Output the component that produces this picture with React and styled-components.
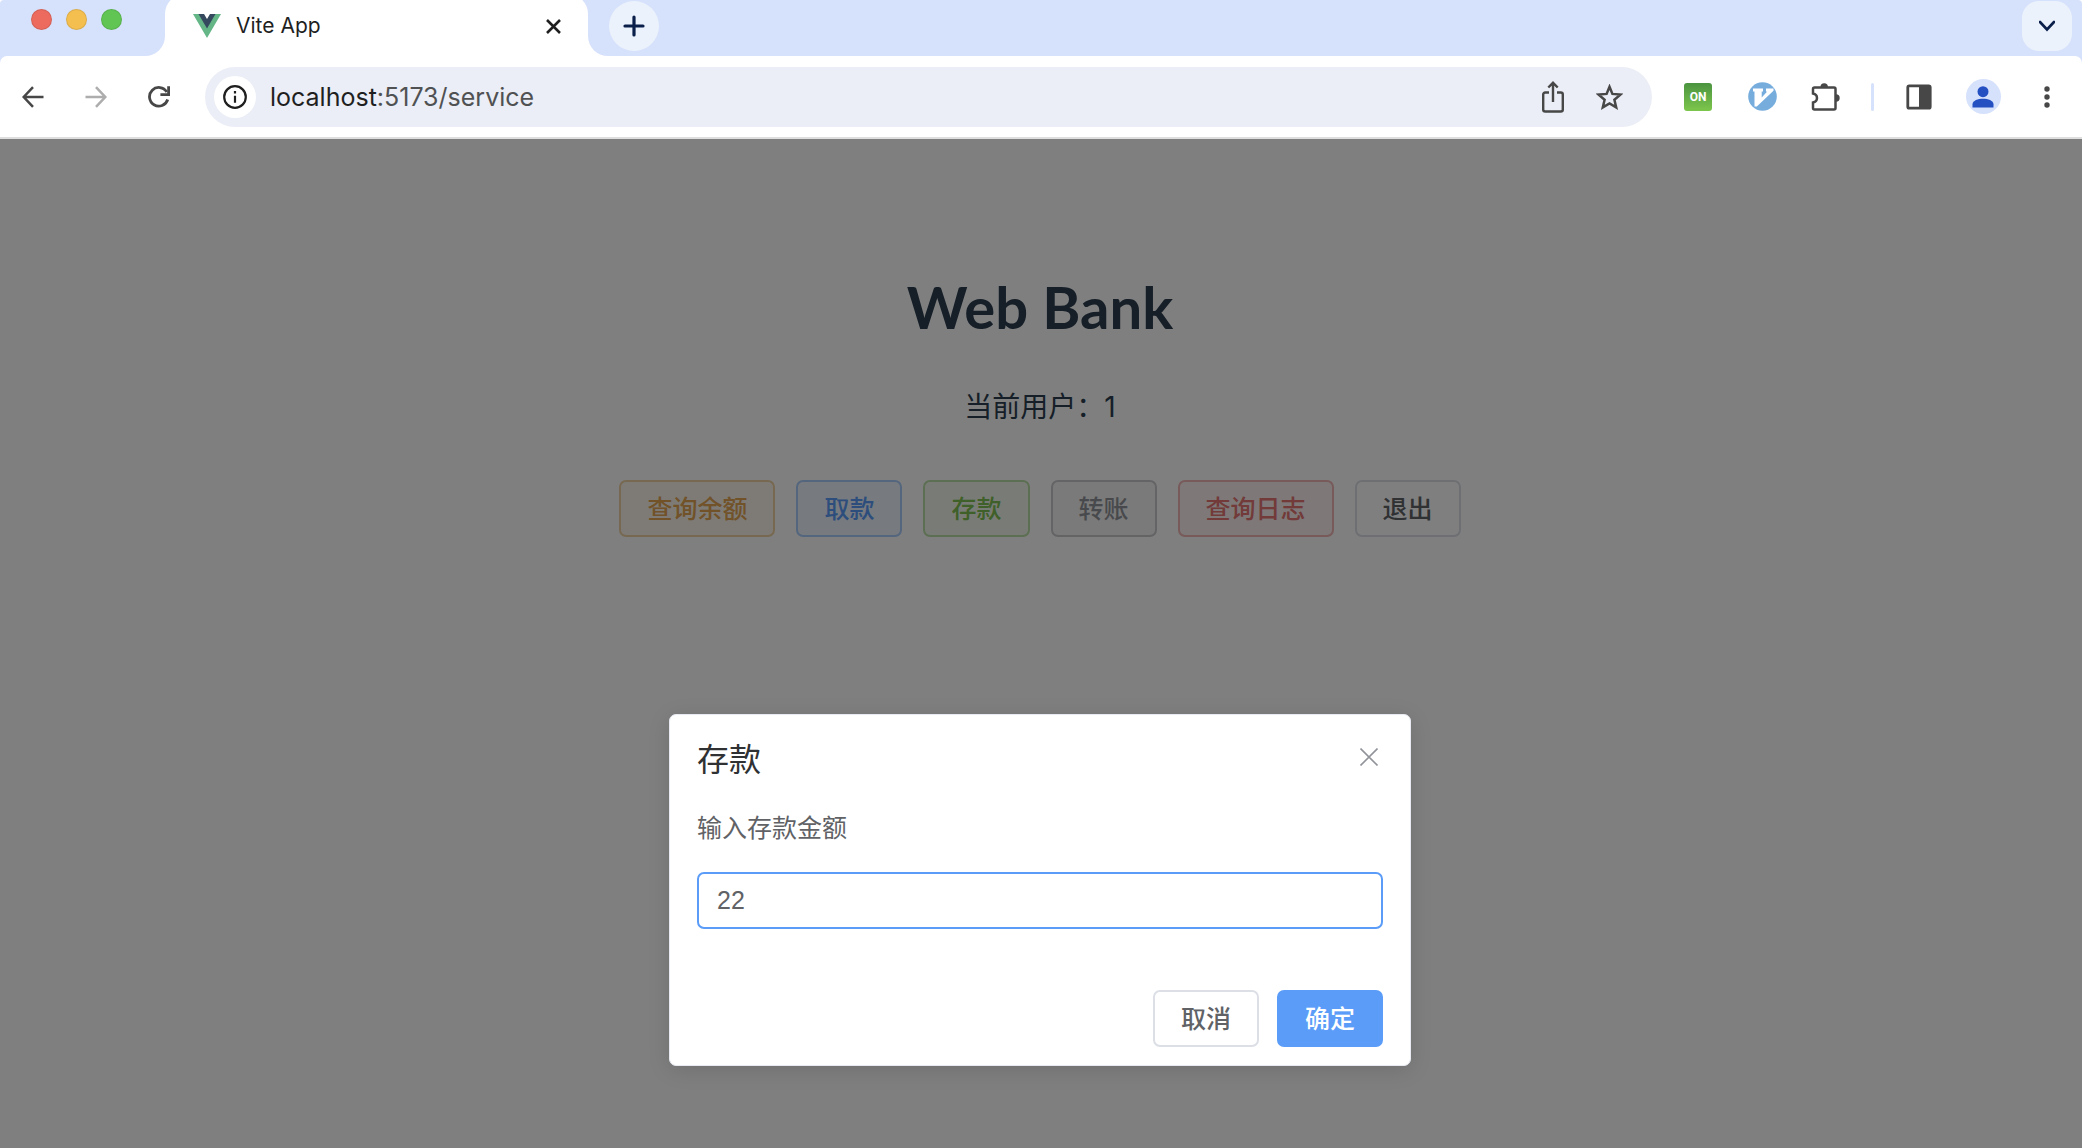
import React, { useState } from "react";
import styled, { createGlobalStyle, css } from "styled-components";

const uiFont = 'Inter, Roboto, "Noto Sans CJK SC", sans-serif';
const pageFont = 'Inter, "Noto Sans CJK SC", sans-serif';
const formFont = '"Liberation Sans", "Noto Sans CJK SC", sans-serif';

const GlobalStyle = createGlobalStyle`
  *, *::before, *::after { box-sizing: border-box; }
  html, body, #root { height: 100%; margin: 0; }
  body { background: #fff; font-family: ${uiFont}; }
  h1, h2, p { margin: 0; }
  button, input { font: inherit; margin: 0; }
  svg { display: block; }
`;

const Window = styled.div`
  display: flex;
  flex-direction: column;
  min-height: 100%;
  border-radius: 4px 4px 0 0;
  overflow: hidden;
`;

/* Tab strip */
const strip = "#d6e1fb";

const TabStrip = styled.header`
  display: flex;
  height: 56px;
  background: #fff;
  overflow: hidden;
`;

const Controls = styled.div`
  display: flex;
  gap: 14px;
  width: 165px;
  padding: 9px 0 0 31px;
  background: ${strip};
  border-bottom-right-radius: 20px;
`;

const Light = styled.button`
  width: 21px;
  height: 21px;
  padding: 0;
  border: 1px solid rgba(0, 0, 0, 0.1);
  border-radius: 50%;
  background: ${(p) => p.$color};
`;

const TabSlot = styled.div`
  display: flex;
  align-items: flex-end;
  width: 423px;
  background: ${strip};
`;

const Tab = styled.div`
  display: flex;
  flex: 1;
  align-items: center;
  gap: 15px;
  height: 62px;
  padding: 2px 20px 0 28px;
  border-radius: 20px 20px 0 0;
  background: #fff;
  color: #1f1f1f;
`;

const TabTitle = styled.span`
  flex: 1;
  font-size: 21px;
  line-height: 24px;
`;

const PlainButton = styled.button`
  display: grid;
  place-items: center;
  width: ${(p) => p.$size || 48}px;
  height: ${(p) => p.$size || 48}px;
  flex: none;
  padding: 0;
  border: 0;
  border-radius: 50%;
  background: ${(p) => p.$bg || "transparent"};
  color: ${(p) => p.$color || "#474747"};
`;

const StripRest = styled.div`
  display: flex;
  flex: 1;
  justify-content: space-between;
  padding: 1px 10px 0 21px;
  background: ${strip};
  border-bottom-left-radius: 20px;
`;

const TabListButton = styled(PlainButton)`
  border-radius: 17px;
`;

/* Toolbar */
const ToolbarBack = styled.div`
  background: ${strip};
`;

const Toolbar = styled.div`
  display: flex;
  align-items: center;
  gap: 22px;
  height: 83px;
  padding: 0 11px 0 9px;
  border-bottom: 2px solid #dedede;
  border-radius: 7px 7px 0 0;
  background: #fff;
`;

const Group = styled.div`
  display: flex;
  align-items: center;
  gap: ${(p) => p.$gap || 16}px;
`;

const Omnibox = styled.div`
  display: flex;
  flex: 1;
  align-items: center;
  height: 60px;
  padding: 0 19px 0 9px;
  border-radius: 30px;
  background: #ebeef6;
`;

const Address = styled.div`
  flex: 1;
  padding-left: 14px;
  font-size: 25px;
  line-height: 30px;
  color: #505153;
`;

const Host = styled.span`
  color: #1f1f1f;
`;

const OnBadge = styled.span`
  display: grid;
  place-items: center;
  width: 28px;
  height: 28px;
  border-radius: 3px;
  background: linear-gradient(#4b9440, #7dc64c);
  color: #fff;
  font: 700 12px/28px Roboto, sans-serif;
`;

const Divider = styled.span`
  width: 3px;
  height: 28px;
  margin: 0 5px;
  border-radius: 2px;
  background: ${strip};
`;

const Avatar = styled.span`
  display: grid;
  place-items: center;
  width: 35px;
  height: 35px;
  border-radius: 50%;
  background: ${strip};
`;

/* Page */
const Viewport = styled.div`
  position: relative;
  display: flex;
  flex: 1;
  flex-direction: column;
`;

const Page = styled.main`
  display: flex;
  flex-direction: column;
  align-items: center;
  padding: 132px 2px 0 0;
  font-family: ${pageFont};
  color: #2c3e50;
`;

const Heading = styled.h1`
  font: 700 58px/72px Lato, sans-serif;
`;

const CurrentUser = styled.p`
  margin-top: 43px;
  font-size: 28px;
  line-height: 42px;
`;

const Actions = styled.div`
  display: flex;
  gap: 21px;
  margin-top: 52px;
`;

const tones = {
  warning: ["#e2a452", "#efd3a3", "#fcf6ed"],
  primary: ["#5a9cf8", "#a9cdfb", "#eef5fe"],
  success: ["#7ec050", "#bbdfa5", "#f2f9ec"],
  info: ["#909398", "#c8c9cc", "#f4f4f5"],
  danger: ["#e47470", "#efb5b3", "#fcf0f0"],
  plain: ["#606266", "#dcdfe6", "#ffffff"],
  solid: ["#ffffff", "#5a9cf8", "#5a9cf8"],
};

const Button = styled.button`
  height: 57px;
  padding: 0 26px;
  border: 2px solid;
  border-radius: 7px;
  font-family: ${formFont};
  font-size: 25px;
  font-weight: 500;
  line-height: 36px;
  ${(p) => {
    const [text, edge, fill] = tones[p.$tone];
    return css`
      color: ${text};
      border-color: ${edge};
      background: ${fill};
    `;
  }}
`;

/* Dialog */
const Overlay = styled.div`
  position: absolute;
  inset: 0;
  display: flex;
  justify-content: center;
  align-items: flex-start;
  padding: 575px 2px 0 0;
  background: rgba(0, 0, 0, 0.5);
`;

const Dialog = styled.form`
  display: flex;
  flex-direction: column;
  width: 742px;
  max-width: 100%;
  padding: 25px 27px 18px;
  border: 1px solid #e8eaf2;
  border-radius: 7px;
  background: #fff;
  box-shadow: 0 4px 22px rgba(0, 0, 0, 0.12);
  font-family: ${formFont};
  color: #606266;
`;

const DialogHead = styled.div`
  display: flex;
  justify-content: space-between;
  align-items: flex-start;
`;

const DialogTitle = styled.h2`
  font-size: 32px;
  font-weight: 400;
  line-height: 40px;
  color: #303133;
`;

const CloseButton = styled(PlainButton)`
  margin-top: 3px;
`;

const FieldLabel = styled.label`
  margin-top: 30px;
  font-size: 25px;
  line-height: 36px;
`;

const Field = styled.input`
  height: 57px;
  margin-top: 26px;
  padding: 0 18px;
  border: 2px solid #5a9cf8;
  border-radius: 7px;
  outline: none;
  background: #fff;
  font-size: 25px;
  color: #606266;
`;

const DialogActions = styled.div`
  display: flex;
  justify-content: flex-end;
  gap: 18px;
  margin-top: 61px;
`;

/* Drawings */
const Stroke = ({ size, width = 2, box = 24, children }) => (
  <svg width={size} height={size} viewBox={`0 0 ${box} ${box}`} fill="none" stroke="currentColor" strokeWidth={width}>
    {children}
  </svg>
);

const VueLogo = () => (
  <svg width="28" height="24" viewBox="0 0 28 24">
    <path d="M0 0h28L14 24z" fill="#64b687" />
    <path d="M5.5 0h17L14 14.5z" fill="#35495e" />
    <path d="M11 0h6l-3 5z" fill="#fff" />
  </svg>
);

const ArrowIcon = ({ flip }) => (
  <Stroke size={22} width={2.5} box={22}>
    <path d={flip ? "M0.5 11h19M11 1.2L20.3 11L11 20.8" : "M21.5 11h-19M11 1.2L1.7 11L11 20.8"} />
  </Stroke>
);

const ReloadIcon = () => (
  <Stroke size={22} width={2.8} box={22}>
    <path d="M19.7 13.5A9.3 9.3 0 1 1 18.8 6" />
    <path d="M20.6 0.2v8.4h-8.2" />
  </Stroke>
);

const InfoIcon = () => (
  <Stroke size={24} width={2.2}>
    <circle cx="12" cy="12" r="10.8" />
    <path d="M12 10.8v7M12 6v2.6" />
  </Stroke>
);

const ShareIcon = () => (
  <svg width="22" height="32" viewBox="0 0 22 32" fill="none" stroke="currentColor" strokeWidth="2.4">
    <path d="M7 11.5H3.2a2 2 0 0 0-2 2V28.500a2 2 0 0 0 2 2h15.600a2 2 0 0 0 2-2V13.500a2 2 0 0 0-2-2H15" />
    <path d="M11 21V2M6.300 6.500L11 1.800l4.700 4.700" />
  </svg>
);

const StarIcon = () => (
  <svg width="27" height="26" viewBox="0 0 27 26" fill="none" stroke="currentColor" strokeWidth="2.500">
    <path d="M13.500 2.800l2.900 7.100 8 .7-6 5.100 1.800 7.700-6.700-4-6.700 4 1.800-7.700-6-5.100 8-.7z" />
  </svg>
);

const VimIcon = () => (
  <svg width="29" height="29" viewBox="0 0 29 29">
    <circle cx="14.500" cy="14.500" r="14.300" fill="#76addd" />
    <path d="M5 6.500h10v3h-1.300v6L19 9.800l-1-.3v-3h7.500v2.300L8.800 24.500H6.500v-15H5z" fill="#fff" />
  </svg>
);

const PuzzleIcon = () => (
  <svg width="30" height="30" viewBox="0 0 30 30">
    <path
      d="M3.500 5.500H23a1.500 1.500 0 0 1 1.500 1.500V26a1.500 1.500 0 0 1-1.500 1.500H3.500A1.500 1.500 0 0 1 2 26v-5.500c5.300-1 5.300-8 0-9V7a1.500 1.500 0 0 1 1.500-1.500z"
      fill="none"
      stroke="currentColor"
      strokeWidth="2.500"
    />
    <path d="M9.500 5a3.700 3.700 0 0 1 7.400 0zM25 12.300a3.700 3.700 0 0 1 0 7.400z" fill="currentColor" />
  </svg>
);

const PanelIcon = () => (
  <svg width="26" height="26" viewBox="0 0 26 26">
    <rect x="1.800" y="1.800" width="22.400" height="22.400" rx="1.500" fill="none" stroke="currentColor" strokeWidth="2.800" />
    <path d="M13 1h11v24H13z" fill="currentColor" />
  </svg>
);

const PersonIcon = () => (
  <svg width="22" height="22" viewBox="0 0 22 22" fill="#2450c2">
    <circle cx="11" cy="5.700" r="5.500" />
    <path d="M0.500 21.500v-3.300C0.500 14.500 6 12.700 11 12.700s10.500 1.800 10.500 5.500v3.300z" />
  </svg>
);

const DotsIcon = () => (
  <svg width="6" height="22" viewBox="0 0 6 22" fill="currentColor">
    <circle cx="3" cy="3" r="2.700" />
    <circle cx="3" cy="11" r="2.700" />
    <circle cx="3" cy="19" r="2.700" />
  </svg>
);

const lights = [
  ["关闭窗口", "#ec6a5e"],
  ["最小化", "#f4bf4f"],
  ["全屏", "#61c554"],
];

const actions = [
  ["查询余额", "warning"],
  ["取款", "primary"],
  ["存款", "success"],
  ["转账", "info"],
  ["查询日志", "danger"],
  ["退出", "plain"],
];

export default function App() {
  const [amount, setAmount] = useState("22");

  return (
    <Window>
      <GlobalStyle />
      <TabStrip>
        <Controls>
          {lights.map(([name, color]) => (
            <Light key={name} type="button" aria-label={name} $color={color} />
          ))}
        </Controls>
        <TabSlot>
          <Tab>
            <VueLogo />
            <TabTitle>Vite App</TabTitle>
            <PlainButton type="button" aria-label="Close tab" $size={30} $color="#1f1f1f">
              <Stroke size={15} width={2.6} box={15}>
                <path d="M1 1l13 13M14 1L1 14" />
              </Stroke>
            </PlainButton>
          </Tab>
        </TabSlot>
        <StripRest>
          <PlainButton type="button" aria-label="New tab" $size={50} $bg="#ebf2fc" $color="#0a1f4a">
            <Stroke size={22} width={3.2} box={22}>
              <path d="M11 2v18M2 11h18" strokeLinecap="round" />
            </Stroke>
          </PlainButton>
          <TabListButton type="button" aria-label="Search tabs" $size={50} $bg="#ebf2fc" $color="#0a1f4a">
            <Stroke size={16} width={2.6} box={16}>
              <path d="M1 4l7 7.500L15 4" strokeLinecap="round" />
            </Stroke>
          </TabListButton>
        </StripRest>
      </TabStrip>

      <ToolbarBack>
        <Toolbar>
          <Group $gap={15}>
            <PlainButton type="button" aria-label="Back">
              <ArrowIcon />
            </PlainButton>
            <PlainButton type="button" aria-label="Forward" $color="#adadad">
              <ArrowIcon flip />
            </PlainButton>
            <PlainButton type="button" aria-label="Reload">
              <ReloadIcon />
            </PlainButton>
          </Group>
          <Omnibox>
            <PlainButton type="button" aria-label="Site information" $size={42} $bg="#fff" $color="#1f1f1f">
              <InfoIcon />
            </PlainButton>
            <Address>
              <Host>localhost</Host>:5173/service
            </Address>
            <Group $gap={8}>
              <PlainButton type="button" aria-label="Share">
                <ShareIcon />
              </PlainButton>
              <PlainButton type="button" aria-label="Bookmark">
                <StarIcon />
              </PlainButton>
            </Group>
          </Omnibox>
          <Group>
            <PlainButton type="button">
              <OnBadge>ON</OnBadge>
            </PlainButton>
            <PlainButton type="button" aria-label="Vimium">
              <VimIcon />
            </PlainButton>
            <PlainButton type="button" aria-label="Extensions">
              <PuzzleIcon />
            </PlainButton>
            <Divider />
            <PlainButton type="button" aria-label="Side panel">
              <PanelIcon />
            </PlainButton>
            <PlainButton type="button" aria-label="Profile">
              <Avatar>
                <PersonIcon />
              </Avatar>
            </PlainButton>
            <PlainButton type="button" aria-label="Menu">
              <DotsIcon />
            </PlainButton>
          </Group>
        </Toolbar>
      </ToolbarBack>

      <Viewport>
        <Page>
          <Heading>Web Bank</Heading>
          <CurrentUser>当前用户：1</CurrentUser>
          <Actions>
            {actions.map(([name, tone]) => (
              <Button key={name} type="button" $tone={tone}>
                {name}
              </Button>
            ))}
          </Actions>
        </Page>
        <Overlay>
          <Dialog role="dialog" aria-labelledby="dialog-title" onSubmit={(e) => e.preventDefault()}>
            <DialogHead>
              <DialogTitle id="dialog-title">存款</DialogTitle>
              <CloseButton type="button" aria-label="关闭" $size={28} $color="#909399">
                <Stroke size={18} width={1.6} box={18}>
                  <path d="M0.500 0.500l17 17M17.500 0.500l-17 17" />
                </Stroke>
              </CloseButton>
            </DialogHead>
            <FieldLabel htmlFor="amount">输入存款金额</FieldLabel>
            <Field id="amount" type="text" value={amount} onChange={(e) => setAmount(e.target.value)} />
            <DialogActions>
              <Button type="button" $tone="plain">
                取消
              </Button>
              <Button type="submit" $tone="solid">
                确定
              </Button>
            </DialogActions>
          </Dialog>
        </Overlay>
      </Viewport>
    </Window>
  );
}
